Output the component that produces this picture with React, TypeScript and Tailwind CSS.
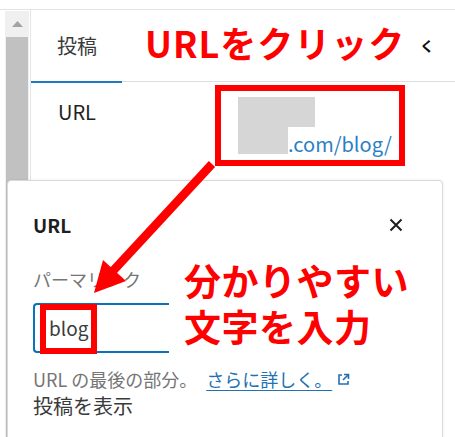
import React from 'react';

const font = { fontFamily: '"Noto Sans CJK JP", "Noto Sans", sans-serif' };

const ScrollTrack = () => (
  <div className="w-[30px] pl-[5px] pt-px flex-shrink-0">
    <div className="w-[24px] h-full bg-[#f0f0f0] flex flex-col">
      <div className="h-[26px] flex items-center justify-center">
        <svg width="11" height="6" viewBox="0 0 11 6">
          <polygon points="0,6 5.5,0 11,6" fill="#a3a3a3" />
        </svg>
      </div>
      <div className="flex-1 ml-px mr-[1px] bg-[#c1c1c1]" />
    </div>
  </div>
);

const Annotations = () => (
  <>
    {/* top label */}
    <div className="absolute left-[145px] top-[24px] text-[36px] leading-none font-bold text-[#ff0000] tracking-[1px]">
      URLをクリック
    </div>
    {/* box around url */}
    <div className="absolute left-[215px] top-[85px] w-[190px] h-[81px] border-[6px] border-[#ff0000]" />
    {/* box around slug */}
    <div className="absolute left-[40px] top-[304px] w-[57px] h-[50px] border-[6px] border-[#ff0000]" />
    {/* right label */}
    <div className="absolute left-[184px] top-[257px] text-[37px] leading-[46px] font-bold text-[#ff0000] tracking-[0.5px]">
      <div>分かりやすい</div>
      <div>文字を入力</div>
    </div>
    {/* arrow */}
    <svg className="absolute left-0 top-0" width="455" height="437" viewBox="0 0 455 437">
      <line x1="212" y1="164" x2="112" y2="272" stroke="#ff0000" strokeWidth="8.5" />
      <polygon points="94,293 103,260 126,281" fill="#ff0000" />
    </svg>
  </>
);

export default function App() {
  return (
    <div className="relative w-[455px] h-[437px] overflow-hidden bg-white" style={font}>
      <div className="h-[10px] border-b border-[#e2e2e2]" />
      <div className="flex h-[427px]">
        <ScrollTrack />
        <div className="flex-1 border-l border-[#e4e4e4] flex flex-col">
          {/* tabs */}
          <div className="h-[72px] flex border-b border-[#dedede]">
            <div className="w-[91px] h-[73px] pl-[26px] flex items-center border-b-2 border-[#1f7ac2] text-[20px] text-[#3a3a3a]">
              投稿
            </div>
            <div className="ml-auto pr-[21px] flex items-center text-[14px] font-bold text-[#111]">く</div>
          </div>
          {/* url row */}
          <div className="flex pt-[16px] pl-[27px]">
            <div className="w-[180px] text-[20px] leading-[28px] text-[#222]">URL</div>
            <div className="flex flex-col -mt-[1px]">
              <div className="w-[77px] h-[30px] bg-[#d6d6d6]" />
              <div className="flex items-end">
                <div className="w-[50px] h-[27px] bg-[#d6d6d6]" />
                <span className="text-[20px] leading-[24px] text-[#2a7fc5] -mb-[2px]">.com/blog/</span>
              </div>
            </div>
          </div>
        </div>
      </div>

      {/* popover */}
      <div className="absolute left-[7px] top-[180px] w-[436px] h-[280px] bg-white border border-[#d9d9d9] rounded-t-[4px] shadow-[0_0_3px_rgba(0,0,0,0.08)] pl-[25px] pr-[38px] pt-[30px]">
        <div className="flex items-center justify-between h-[28px]">
          <span className="text-[19px] font-semibold text-[#1e1e1e]">URL</span>
          <svg width="14" height="14" viewBox="0 0 14 14" className="mr-px">
            <path d="M1.5 1.5 L12.5 12.5 M12.5 1.5 L1.5 12.5" stroke="#1e1e1e" strokeWidth="2" />
          </svg>
        </div>
        <div className="mt-[28px] text-[18px] leading-[24px] text-[#757575]">パーマリンク</div>
        <div className="mt-[12px] w-[136px] h-[50px] border-l-2 border-t-2 border-b-2 border-[#0a74ba] rounded-l-[4px] flex items-center pl-[14px] text-[19px] text-[#3c3c3c]">
          blog
        </div>
        <div className="mt-[14px] text-[18px] leading-[24px] text-[#757575] flex items-center">
          <span>URL の最後の部分。</span>
          <span className="ml-[9px] text-[#2271b1] underline underline-offset-[3px]">さらに詳しく。</span>
          <svg width="13" height="13" viewBox="0 0 13 13" className="ml-[5px]">
            <path d="M5 2 H2 V11 H11 V8" fill="none" stroke="#2271b1" strokeWidth="1.6" />
            <path d="M7 1.5 H11.5 V6 M11.5 1.5 L6 7" fill="none" stroke="#2271b1" strokeWidth="1.6" />
          </svg>
        </div>
        <div className="mt-px text-[20px] leading-[28px] text-[#3a3a3a]">投稿を表示</div>
      </div>

      <Annotations />
    </div>
  );
}
